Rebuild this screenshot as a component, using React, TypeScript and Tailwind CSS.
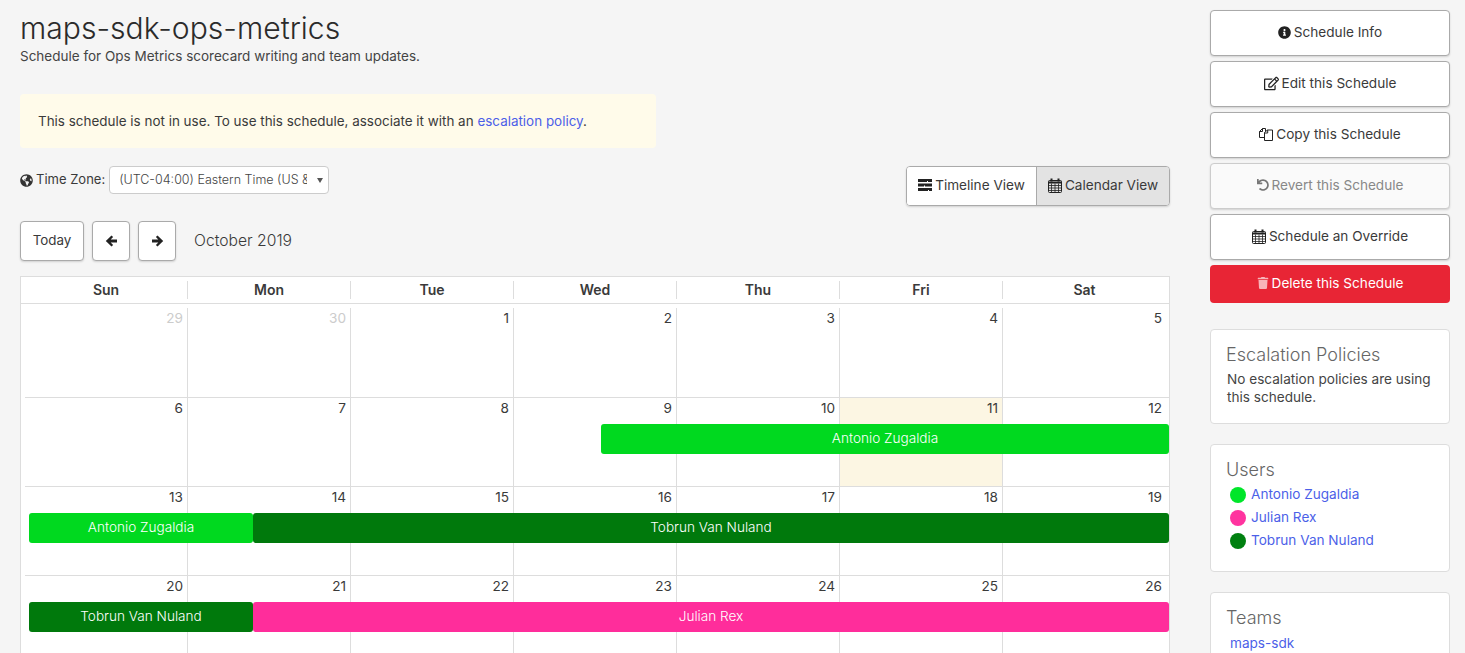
import { FaInfoCircle, FaRegEdit, FaUndo, FaTrash, FaGlobeAmericas } from "react-icons/fa";
import type { ReactNode } from "react";

const days = ["Sun", "Mon", "Tue", "Wed", "Thu", "Fri", "Sat"];

const GREEN = "bg-[#00d91f]";
const DARK = "bg-[#00790c]";
const PINK = "bg-[#ff2d9b]";

type Bar = { label: string; left: number; width: number; color: string };

const weeks: { nums: number[]; muted?: number; today?: number; bars: Bar[] }[] = [
  { nums: [29, 30, 1, 2, 3, 4, 5], muted: 2, bars: [] },
  {
    nums: [6, 7, 8, 9, 10, 11, 12],
    today: 5,
    bars: [{ label: "Antonio Zugaldia", left: 580, width: 568, color: GREEN }],
  },
  {
    nums: [13, 14, 15, 16, 17, 18, 19],
    bars: [
      { label: "Antonio Zugaldia", left: 8, width: 224, color: GREEN },
      { label: "Tobrun Van Nuland", left: 232, width: 916, color: DARK },
    ],
  },
  {
    nums: [20, 21, 22, 23, 24, 25, 26],
    bars: [
      { label: "Tobrun Van Nuland", left: 8, width: 224, color: DARK },
      { label: "Julian Rex", left: 232, width: 916, color: PINK },
    ],
  },
];

// font-awesome 4 style icons that the icon packages don't carry
function CalendarIcon() {
  return (
    <svg width="14" height="15" viewBox="0 0 14 15" className="shrink-0" fill="none" stroke="#222">
      <rect x="0.5" y="2.5" width="13" height="12" rx="1" />
      <path d="M0.5 4.5h13" strokeWidth="2" />
      <path d="M0.5 7.5h13M0.5 10h13M0.5 12.5h13M3.5 5.5v9M7 5.5v9M10.5 5.5v9" strokeWidth="0.8" />
      <path d="M3.5 0.5v3M10.5 0.5v3" strokeWidth="2" />
    </svg>
  );
}

function CopyIcon() {
  return (
    <svg width="14" height="14" viewBox="0 0 14 14" className="shrink-0" fill="none" stroke="#222" strokeWidth="1">
      <path d="M5.5 10.5h-5v-6l3-3h3v3" />
      <path d="M0.5 4.5h3v-3" />
      <path d="M5.5 13.5v-8l3-2.5h5v10.5z" fill="#fff" />
      <path d="M5.5 6h3.2v-3" />
    </svg>
  );
}

function TimelineIcon() {
  return (
    <svg width="14" height="12" viewBox="0 0 14 12" className="shrink-0" fill="#222">
      <path d="M0 0h14v3h-4v-1h-1v1h-9z" />
      <path d="M0 4.5h14v3h-7v-1h-1v1h-6z" />
      <path d="M0 9h14v3h-3v-1h-1v1h-10z" />
    </svg>
  );
}

function ArrowIcon({ flip }: { flip?: boolean }) {
  return (
    <svg width="13" height="12" viewBox="0 0 12 12" fill="#222" className={flip ? "-scale-x-100" : ""}>
      <path d="M6 0.5l1.6 1.6-2.4 2.4h6.3v3h-6.3l2.4 2.4-1.6 1.6-5.7-5.5z" />
    </svg>
  );
}

function SideButton({ icon, label, disabled }: { icon: ReactNode; label: string; disabled?: boolean }) {
  return (
    <button
      className={`flex h-[46px] w-full items-center justify-center gap-[3px] rounded border pb-[2px] text-[13.6px] shadow-[0_1px_2px_rgba(0,0,0,0.15)] ${
        disabled ? "border-[#ccc] bg-[#fafafa] text-[#888]" : "border-[#aaa] bg-white text-[#3a3a3a]"
      }`}
    >
      {icon}
      {label}
    </button>
  );
}

function Card({ title, className, children }: { title: string; className: string; children: ReactNode }) {
  return (
    <div className={`rounded border border-[#ddd] bg-white pr-[15px] pl-[15px] ${className}`}>
      <h3 className="text-[18px] leading-[22px] font-light text-[#666]">{title}</h3>
      {children}
    </div>
  );
}

function UserRow({ color, name }: { color: string; name: string }) {
  return (
    <div className="flex h-[23px] items-center pl-[4px]">
      <span className={`mr-[5px] h-4 w-4 rounded-full ${color}`} />
      <a className="text-[13.6px] text-[#4c5fe8]">{name}</a>
    </div>
  );
}

export default function App() {
  return (
    <div className="flex h-screen overflow-hidden bg-[#f5f5f5] pl-[20px] text-[13.6px] text-[#3a3a3a] [font-family:Inter,'Noto_Sans',sans-serif]">
      <main className="w-[1150px] shrink-0">
        <h1 className="pt-[10px] text-[30.1px] leading-[36px] font-light text-[#2b2b2b]">maps-sdk-ops-metrics</h1>
        <p className="text-[13.5px] leading-[20px] text-[#444]">Schedule for Ops Metrics scorecard writing and team updates.</p>

        <div className="mt-[28px] flex h-[54px] w-[636px] items-center rounded bg-[#fffbea] pl-[18px] text-[13.45px]">
          <span>
            This schedule is not in use. To use this schedule, associate it with an{" "}
            <a className="text-[#4c5fe8]">escalation policy</a>.
          </span>
        </div>

        <div className="mt-[18px] flex items-start justify-between">
          <div className="flex h-[28px] items-center">
            <FaGlobeAmericas className="mr-[3px] text-[13px] text-[#333]" />
            <span className="mr-[4px] text-[13px]">Time Zone:</span>
            <div className="relative">
              <select className="h-[28px] w-[220px] appearance-none rounded border border-[#ccc] bg-white pr-[21px] pl-[9px] text-[12.5px] font-light text-[#444]">
                <option>(UTC-04:00) Eastern Time (US &amp; Canada)</option>
              </select>
              <svg width="6" height="5" viewBox="0 0 6 5" className="absolute top-[12px] right-[6px]" fill="#555">
                <path d="M0 0h6l-3 5z" />
              </svg>
            </div>
          </div>
          <div className="flex h-[40px] w-[264px] overflow-hidden rounded border border-[#aaa] shadow-[0_1px_2px_rgba(0,0,0,0.15)]">
            <button className="flex w-[129px] items-center justify-center gap-[3px] bg-white pb-[2px]">
              <TimelineIcon />
              Timeline View
            </button>
            <button className="flex flex-1 items-center justify-center gap-[3px] border-l border-[#aaa] bg-[#e3e3e3] pb-[2px]">
              <CalendarIcon />
              Calendar View
            </button>
          </div>
        </div>

        <div className="mt-[15px] flex items-center">
          <button className="h-[40px] w-[64px] rounded border border-[#aaa] bg-white pb-[2px] text-[13.4px] shadow-[0_1px_2px_rgba(0,0,0,0.15)]">Today</button>
          <button className="ml-[8px] flex h-[40px] w-[38px] items-center justify-center rounded border border-[#aaa] bg-white shadow-[0_1px_2px_rgba(0,0,0,0.15)]">
            <ArrowIcon />
          </button>
          <button className="ml-[8px] flex h-[40px] w-[38px] items-center justify-center rounded border border-[#aaa] bg-white shadow-[0_1px_2px_rgba(0,0,0,0.15)]">
            <ArrowIcon flip />
          </button>
          <span className="ml-[18px] text-[15.7px] font-light">October 2019</span>
        </div>

        <div className="mt-[15px] border border-[#ddd] bg-white">
          <div className="grid h-[27px] grid-cols-[repeat(7,163px)] items-center border-b border-[#ddd] px-[4px]">
            {days.map((d, i) => (
              <div key={d} className={`text-center text-[14px] leading-[18px] font-semibold ${i < 6 ? "border-r border-[#ddd]" : ""}`}>
                {d}
              </div>
            ))}
          </div>
          <div className="pt-[4px]">
            {weeks.map((w, wi) => (
              <div key={wi} className={`relative ml-[4px] h-[89px] ${wi > 0 ? "border-t border-[#ddd]" : ""}`}>
                <div className="grid h-full grid-cols-[repeat(7,163px)]">
                  {w.nums.map((n, i) => (
                    <div
                      key={i}
                      className={`pt-[1px] pr-[4px] text-right leading-[18px] ${i < 6 ? "border-r border-[#ddd]" : ""} ${
                        w.today === i ? "bg-[#fcf6e3]" : ""
                      } ${w.muted && i < w.muted ? "text-[#ccc]" : ""}`}
                    >
                      {n}
                    </div>
                  ))}
                </div>
                {w.bars.map((b) => (
                  <div
                    key={b.left}
                    className={`absolute top-[26px] flex h-[30px] items-center justify-center rounded-[3px] pb-[1px] font-light text-white ${b.color}`}
                    style={{ left: b.left - 4, width: b.width }}
                  >
                    {b.label}
                  </div>
                ))}
              </div>
            ))}
          </div>
        </div>
      </main>

      <aside className="ml-[40px] w-[240px] shrink-0 pt-[10px]">
        <div className="flex flex-col gap-[5px]">
          <SideButton icon={<FaInfoCircle className="text-[13px] text-[#222]" />} label="Schedule Info" />
          <SideButton icon={<FaRegEdit className="text-[15px] text-[#222]" />} label="Edit this Schedule" />
          <SideButton icon={<CopyIcon />} label="Copy this Schedule" />
          <SideButton disabled icon={<FaUndo className="text-[12px] text-[#777]" />} label="Revert this Schedule" />
          <SideButton icon={<CalendarIcon />} label="Schedule an Override" />
          <button className="flex h-[38px] w-full items-center justify-center gap-[3px] rounded bg-[#e82535] pb-[2px] text-[13.6px] text-white">
            <FaTrash className="text-[12px] text-[#f8b4b9]" />
            Delete this Schedule
          </button>
        </div>

        <Card title="Escalation Policies" className="mt-[26px] h-[95px] pt-[14px]">
          <p className="mt-[4px] pl-[1px] text-[13.6px] leading-[18px] text-[#444]">No escalation policies are using this schedule.</p>
        </Card>
        <Card title="Users" className="mt-[20px] h-[128px] pt-[14px]">
          <div className="mt-[2px]">
            <UserRow color="bg-[#00e62a]" name="Antonio Zugaldia" />
            <UserRow color="bg-[#ff339f]" name="Julian Rex" />
            <UserRow color="bg-[#008010]" name="Tobrun Van Nuland" />
          </div>
        </Card>
        <Card title="Teams" className="mt-[20px] h-[100px] pt-[14px]">
          <a className="mt-[4px] block pl-[4px] text-[#4c5fe8]">maps-sdk</a>
        </Card>
      </aside>
    </div>
  );
}
